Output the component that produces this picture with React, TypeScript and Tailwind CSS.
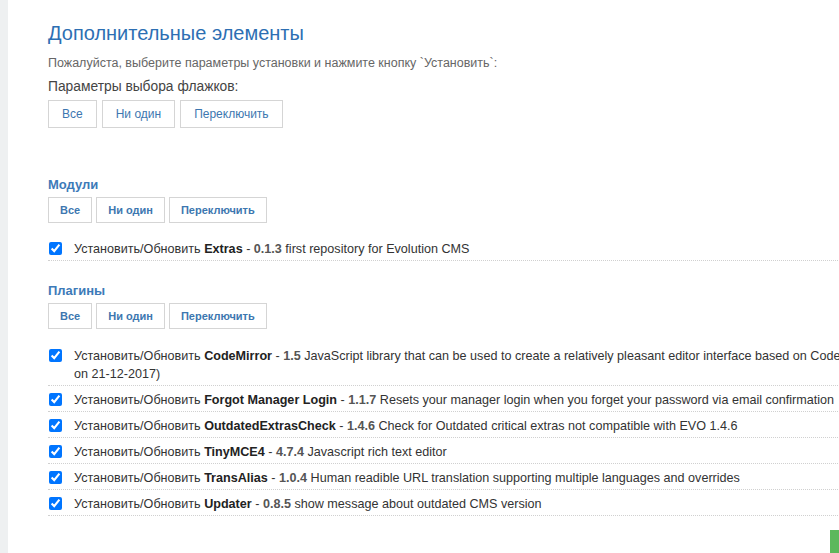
const modules = [
  { name: 'Extras', version: '0.1.3', desc: 'first repository for Evolution CMS' },
]

const plugins = [
  {
    name: 'CodeMirror',
    version: '1.5',
    desc: 'JavaScript library that can be used to create a relatively pleasant editor interface based on CodeMirror (released on 21-12-2017)',
  },
  {
    name: 'Forgot Manager Login',
    version: '1.1.7',
    desc: 'Resets your manager login when you forget your password via email confirmation',
  },
  {
    name: 'OutdatedExtrasCheck',
    version: '1.4.6',
    desc: 'Check for Outdated critical extras not compatible with EVO 1.4.6',
  },
  { name: 'TinyMCE4', version: '4.7.4', desc: 'Javascript rich text editor' },
  {
    name: 'TransAlias',
    version: '1.0.4',
    desc: 'Human readible URL translation supporting multiple languages and overrides',
  },
  { name: 'Updater', version: '0.8.5', desc: 'show message about outdated CMS version' },
]

function SmallButtons() {
  return (
    <div className="flex gap-1">
      {['Все', 'Ни один', 'Переключить'].map((t) => (
        <button
          key={t}
          type="button"
          className="h-[26px] border border-[#d5d5d5] bg-white px-[11px] text-[11px] font-bold text-[#3d77b0]"
        >
          {t}
        </button>
      ))}
    </div>
  )
}

function Row({ name, version, desc }: { name: string; version: string; desc: string }) {
  return (
    <label className="flex items-start border-b border-dotted border-[#d0d0d0] pt-[5px] pb-[2px] text-[12.6px] leading-[18px] text-[#333]">
      <input
        type="checkbox"
        defaultChecked
        className="mt-[2px] ml-px h-[13px] w-[13px] shrink-0 accent-[#0075ff]"
      />
      <span className="ml-[12px]">
        Установить/Обновить <b className="font-bold text-[#222]">{name}</b> -{' '}
        <b className="font-bold text-[#555]">{version}</b> {desc}
      </span>
    </label>
  )
}

export default function App() {
  return (
    <div
      className="flex h-[553px] w-[839px] overflow-hidden bg-white"
      style={{ fontFamily: '"Liberation Sans", Arial, sans-serif' }}
    >
      <div className="w-[8px] shrink-0 bg-[#eef0f1]" />
      <div className="relative w-[932px] shrink-0 pl-[40px] pt-[19px]">
        <h1 className="text-[20px] leading-[28px] text-[#2d6fb3]">Дополнительные элементы</h1>
        <p className="mt-[8px] text-[12.5px] leading-[16px] text-[#666]">
          Пожалуйста, выберите параметры установки и нажмите кнопку `Установить`:
        </p>
        <p className="mt-[7px] text-[13.8px] leading-[18px] text-[#444]">Параметры выбора флажков:</p>
        <div className="mt-[4px] flex gap-[5px]">
          {['Все', 'Ни один', 'Переключить'].map((t) => (
            <button
              key={t}
              type="button"
              className="h-[28px] border border-[#d5d5d5] bg-white px-[13px] text-[12px] text-[#3d77b0]"
            >
              {t}
            </button>
          ))}
        </div>

        <h2 className="mt-[48px] text-[13px] font-bold leading-[18px] text-[#3d7ab8]">Модули</h2>
        <div className="mt-[3px]">
          <SmallButtons />
        </div>
        <div className="mt-[12px]">
          {modules.map((m) => (
            <Row key={m.name} {...m} />
          ))}
        </div>

        <h2 className="mt-[21px] text-[13px] font-bold leading-[18px] text-[#3d7ab8]">Плагины</h2>
        <div className="mt-[3px]">
          <SmallButtons />
        </div>
        <div className="mt-[13px]">
          {plugins.map((p) => (
            <Row key={p.name} {...p} />
          ))}
        </div>

        <div className="absolute left-[822px] top-[530px] h-[40px] w-[100px] bg-[#5cb85c]" />
      </div>
    </div>
  )
}
